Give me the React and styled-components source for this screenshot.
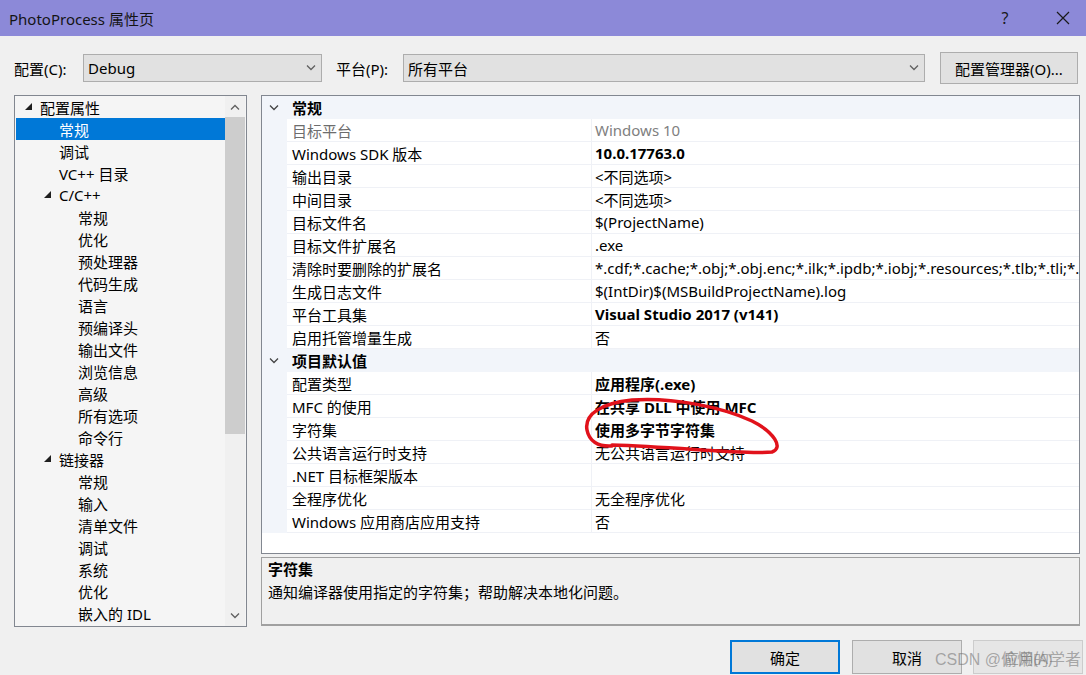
import React from 'react'
import styled, { createGlobalStyle } from 'styled-components'

const GlobalStyle = createGlobalStyle`
  html, body {
    margin: 0;
    padding: 0;
    background: #f0f0f0;
  }
  body {
    font-family: "Noto Sans", "Noto Sans CJK SC", sans-serif;
    font-size: 15px;
    color: #000;
  }
`

const treeItems = [
  { level: 0, label: '配置属性', open: true },
  { level: 1, label: '常规', selected: true },
  { level: 1, label: '调试' },
  { level: 1, label: 'VC++ 目录' },
  { level: 1, label: 'C/C++', open: true },
  { level: 2, label: '常规' },
  { level: 2, label: '优化' },
  { level: 2, label: '预处理器' },
  { level: 2, label: '代码生成' },
  { level: 2, label: '语言' },
  { level: 2, label: '预编译头' },
  { level: 2, label: '输出文件' },
  { level: 2, label: '浏览信息' },
  { level: 2, label: '高级' },
  { level: 2, label: '所有选项' },
  { level: 2, label: '命令行' },
  { level: 1, label: '链接器', open: true },
  { level: 2, label: '常规' },
  { level: 2, label: '输入' },
  { level: 2, label: '清单文件' },
  { level: 2, label: '调试' },
  { level: 2, label: '系统' },
  { level: 2, label: '优化' },
  { level: 2, label: '嵌入的 IDL' },
]

const sections = [
  {
    title: '常规',
    rows: [
      { name: '目标平台', value: 'Windows 10', muted: true },
      { name: 'Windows SDK 版本', value: '10.0.17763.0', bold: true },
      { name: '输出目录', value: '<不同选项>' },
      { name: '中间目录', value: '<不同选项>' },
      { name: '目标文件名', value: '$(ProjectName)' },
      { name: '目标文件扩展名', value: '.exe' },
      {
        name: '清除时要删除的扩展名',
        value:
          '*.cdf;*.cache;*.obj;*.obj.enc;*.ilk;*.ipdb;*.iobj;*.resources;*.tlb;*.tli;*.tlh;*.tmp;*.rsp;*.pgc;*.pgd;*.meta;*.tlog;*.manifest;*.res;*.pch;*.exp',
      },
      { name: '生成日志文件', value: '$(IntDir)$(MSBuildProjectName).log' },
      { name: '平台工具集', value: 'Visual Studio 2017 (v141)', bold: true },
      { name: '启用托管增量生成', value: '否' },
    ],
  },
  {
    title: '项目默认值',
    rows: [
      { name: '配置类型', value: '应用程序(.exe)', bold: true },
      { name: 'MFC 的使用', value: '在共享 DLL 中使用 MFC', bold: true },
      { name: '字符集', value: '使用多字节字符集', bold: true },
      { name: '公共语言运行时支持', value: '无公共语言运行时支持' },
      { name: '.NET 目标框架版本', value: '' },
      { name: '全程序优化', value: '无全程序优化' },
      { name: 'Windows 应用商店应用支持', value: '否' },
    ],
  },
]

function Chevron({ up, color = '#606060' }) {
  return (
    <svg width="10" height="6" viewBox="0 0 10 6">
      <polyline
        points={up ? '1,5.5 5,1.5 9,5.5' : '1,0.5 5,4.5 9,0.5'}
        fill="none"
        stroke={color}
        strokeWidth="1.3"
      />
    </svg>
  )
}

function Expander() {
  return (
    <svg width="7" height="7" viewBox="0 0 7 7">
      <polygon points="7,0 7,7 0,7" fill="#1e1e1e" />
    </svg>
  )
}

function App() {
  return (
    <Window>
      <GlobalStyle />
      <TitleBar>
        <Title>PhotoProcess 属性页</Title>
        <TitleButtons>
          <TitleButton>?</TitleButton>
          <TitleButton>
            <svg width="14" height="14" viewBox="0 0 14 14">
              <path d="M1 1 L13 13 M13 1 L1 13" stroke="#1a1a1a" strokeWidth="1.2" />
            </svg>
          </TitleButton>
        </TitleButtons>
      </TitleBar>

      <Body>
        <ConfigRow>
          <Label $width={69}>配置(C):</Label>
          <Combo $width={239}>
            <span>Debug</span>
            <Chevron />
          </Combo>
          <Label $width={67} $gap={14}>平台(P):</Label>
          <Combo $width={522}>
            <span>所有平台</span>
            <Chevron />
          </Combo>
          <Button $width={138} $height={32} $gap={15}>
            配置管理器(O)...
          </Button>
        </ConfigRow>

        <Main>
          <TreePanel>
            <TreeList>
              {treeItems.map((item, i) => (
                <TreeRow key={i} $level={item.level} $selected={item.selected}>
                  <TreeToggle>{item.open && <Expander />}</TreeToggle>
                  {item.label}
                </TreeRow>
              ))}
            </TreeList>
            <ScrollBar>
              <ScrollArrow>
                <Chevron up />
              </ScrollArrow>
              <ScrollTrack>
                <ScrollThumb />
              </ScrollTrack>
              <ScrollArrow>
                <Chevron />
              </ScrollArrow>
            </ScrollBar>
          </TreePanel>

          <RightColumn>
            <PropGrid>
              {sections.map((section) => (
                <React.Fragment key={section.title}>
                  <SectionRow>
                    <Rail>
                      <Chevron color="#444" />
                    </Rail>
                    <SectionTitle>{section.title}</SectionTitle>
                  </SectionRow>
                  {section.rows.map((row) => (
                    <PropRow key={row.name}>
                      <Rail />
                      <NameCell $muted={row.muted}>{row.name}</NameCell>
                      <ValueCell $muted={row.muted} $bold={row.bold}>
                        {row.value}
                      </ValueCell>
                    </PropRow>
                  ))}
                </React.Fragment>
              ))}
            </PropGrid>
            <Description>
              <DescTitle>字符集</DescTitle>
              <DescText>通知编译器使用指定的字符集；帮助解决本地化问题。</DescText>
            </Description>
          </RightColumn>
        </Main>

        <Footer>
          <Button $width={110} $height={34} $primary>
            确定
          </Button>
          <Button $width={110} $height={34} $gap={12}>
            取消
          </Button>
          <Button $width={110} $height={34} $gap={11} $disabled>
            应用(A)
          </Button>
          <Watermark>CSDN @偷懒的学者</Watermark>
        </Footer>
      </Body>

      <Annotation width="1086" height="675" viewBox="0 0 1086 675">
        <path
          d="M612 445 C 680 447, 745 455, 772 452 C 784 448, 774 432, 752 421 C 722 407, 672 397, 632 400 C 602 403, 584 414, 587 430 C 589 441, 598 447, 612 446"
          fill="none"
          stroke="#e1121b"
          strokeWidth="3.5"
          strokeLinecap="round"
        />
      </Annotation>
    </Window>
  )
}

const Window = styled.div`
  position: relative;
  width: 1086px;
  height: 675px;
  overflow: hidden;
  background: #f0f0f0;
  display: flex;
  flex-direction: column;
`

const TitleBar = styled.div`
  height: 36px;
  flex-shrink: 0;
  background: #8c89d8;
  display: flex;
  align-items: center;
  padding-left: 9px;
`

const Title = styled.div`
  font-size: 15px;
  color: #141414;
`

const TitleButtons = styled.div`
  margin-left: auto;
  display: flex;
  gap: 12px;
`

const TitleButton = styled.div`
  width: 46px;
  height: 36px;
  display: flex;
  align-items: center;
  justify-content: center;
  font-size: 16px;
  color: #1a1a1a;
`

const Body = styled.div`
  position: relative;
  flex: 1;
  padding: 16px 0 0 14px;
  display: flex;
  flex-direction: column;
`

const ConfigRow = styled.div`
  display: flex;
  align-items: center;
  height: 32px;
`

const Label = styled.div`
  width: ${(p) => p.$width}px;
  margin-left: ${(p) => p.$gap || 0}px;
  white-space: nowrap;
`

const Combo = styled.div`
  width: ${(p) => p.$width}px;
  height: 28px;
  box-sizing: border-box;
  border: 1px solid #adadad;
  background: #e1e1e1;
  display: flex;
  align-items: center;
  justify-content: space-between;
  padding: 0 5px 0 4px;
`

const Button = styled.div`
  width: ${(p) => p.$width}px;
  height: ${(p) => p.$height}px;
  margin-left: ${(p) => p.$gap || 0}px;
  box-sizing: border-box;
  border: ${(p) => (p.$primary ? '2px solid #0078d7' : p.$disabled ? '1px solid #cccccc' : '1px solid #adadad')};
  background: ${(p) => (p.$disabled ? '#e6e6e6' : '#e1e1e1')};
  color: ${(p) => (p.$disabled ? '#a0a0a0' : '#000')};
  display: flex;
  align-items: center;
  justify-content: center;
  flex-shrink: 0;
`

const Main = styled.div`
  display: flex;
  gap: 14px;
  margin-top: 11px;
  height: 532px;
`

const TreePanel = styled.div`
  width: 233px;
  box-sizing: border-box;
  border: 1px solid #828790;
  background: #f5f5f5;
  display: flex;
  overflow: hidden;
`

const TreeList = styled.div`
  flex: 1;
  overflow: hidden;
`

const TreeRow = styled.div`
  height: 22px;
  display: flex;
  align-items: center;
  margin-left: 1px;
  padding-left: ${(p) => 9 + p.$level * 19}px;
  white-space: nowrap;
  background: ${(p) => (p.$selected ? '#0078d7' : 'transparent')};
  color: ${(p) => (p.$selected ? '#fff' : '#000')};
`

const TreeToggle = styled.span`
  width: 15px;
  display: flex;
  align-items: center;
  flex-shrink: 0;
  padding-bottom: 2px;
`

const ScrollBar = styled.div`
  width: 20px;
  margin-right: 1px;
  background: #f0f0f0;
  display: flex;
  flex-direction: column;
`

const ScrollArrow = styled.div`
  height: 21px;
  display: flex;
  align-items: center;
  justify-content: center;
  flex-shrink: 0;
`

const ScrollTrack = styled.div`
  flex: 1;
`

const ScrollThumb = styled.div`
  height: 317px;
  background: #cdcdcd;
`

const RightColumn = styled.div`
  width: 819px;
  display: flex;
  flex-direction: column;
  gap: 3px;
`

const PropGrid = styled.div`
  height: 459px;
  box-sizing: border-box;
  border: 1px solid #828790;
  background: #fff;
  overflow: hidden;
`

const SectionRow = styled.div`
  height: 23px;
  display: flex;
  align-items: center;
  background: #f2f5fa;
`

const Rail = styled.div`
  width: 25px;
  height: 100%;
  flex-shrink: 0;
  background: #f2f5fa;
  display: flex;
  align-items: center;
  justify-content: center;
  padding-right: 2px;
  box-sizing: border-box;
`

const SectionTitle = styled.div`
  font-weight: bold;
  padding-left: 5px;
`

const PropRow = styled.div`
  height: 23px;
  display: flex;
  white-space: nowrap;
`

const NameCell = styled.div`
  width: 304px;
  flex-shrink: 0;
  box-sizing: border-box;
  padding-left: 5px;
  display: flex;
  align-items: center;
  border-bottom: 1px solid #eff1f6;
  color: ${(p) => (p.$muted ? '#6d6d6d' : '#000')};
`

const ValueCell = styled.div`
  flex: 1;
  min-width: 0;
  overflow: hidden;
  box-sizing: border-box;
  padding-left: 3px;
  display: flex;
  align-items: center;
  border-left: 1px solid #eff1f6;
  border-bottom: 1px solid #eff1f6;
  font-weight: ${(p) => (p.$bold ? 'bold' : 'normal')};
  color: ${(p) => (p.$muted ? '#808080' : '#000')};
`

const Description = styled.div`
  height: 69px;
  box-sizing: border-box;
  border: 1px solid #a0a0a0;
  border-bottom-width: 2px;
  background: #f0f0f0;
  padding: 0 6px;
  display: flex;
  flex-direction: column;
  gap: 1px;
`

const DescTitle = styled.div`
  font-weight: bold;
  line-height: 22px;
`

const DescText = styled.div`
  line-height: 22px;
`

const Footer = styled.div`
  position: relative;
  display: flex;
  justify-content: flex-end;
  margin-top: 13px;
  margin-right: 3px;
`

const Watermark = styled.span`
  position: absolute;
  left: 921px;
  top: 6px;
  font-family: "Liberation Sans", "Noto Sans CJK SC", sans-serif;
  font-size: 16px;
  color: rgba(110, 110, 110, 0.55);
  white-space: nowrap;
  pointer-events: none;
`

const Annotation = styled.svg`
  position: absolute;
  left: 0;
  top: 0;
  pointer-events: none;
`

export default App
